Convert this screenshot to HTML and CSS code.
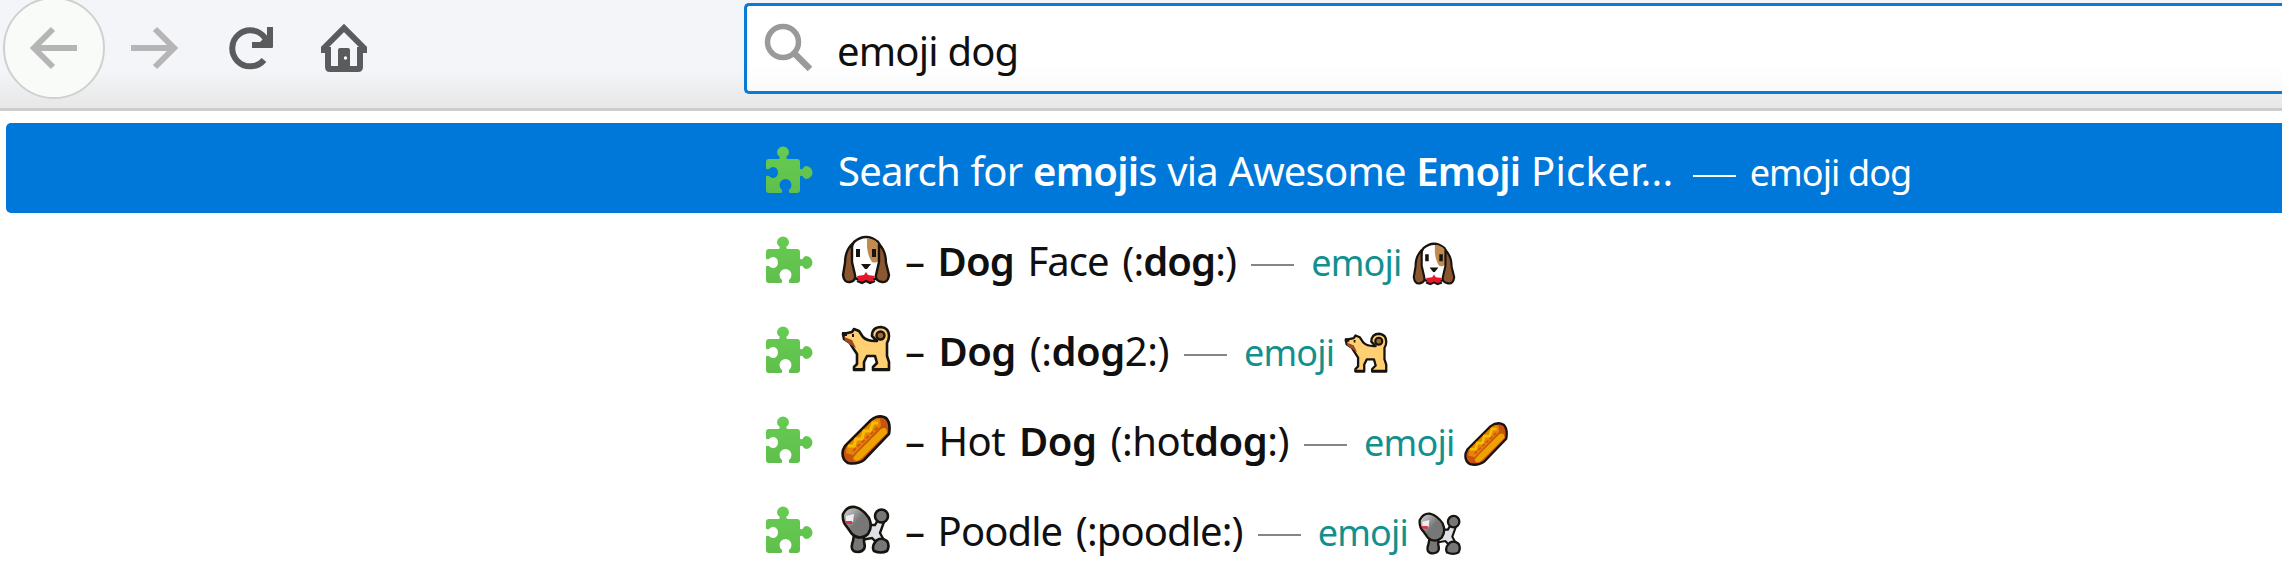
FILE: index.html
```html
<!DOCTYPE html>
<html lang="en">
<head>
<meta charset="utf-8">
<title>emoji dog</title>
<link rel="stylesheet" href="styles.css">
</head>
<body>
<svg class="defs" aria-hidden="true">
  <defs>
    <linearGradient id="green" x1="0" y1="0" x2="0" y2="1"><stop offset="0" stop-color="#66cc52"/><stop offset="1" stop-color="#60bf4c"/></linearGradient>
    <linearGradient id="fur" x1="0" y1="0" x2="1" y2="1"><stop offset="0.1" stop-color="#c8c8c8"/><stop offset="0.5" stop-color="#777"/><stop offset="1" stop-color="#777"/></linearGradient>
    <symbol id="puzzle" viewBox="0 0 48 48">
      <path fill="url(#green)" d="M4 13H13.500Q15 13 14.600 10.500Q12 9 12 6.500A6 6 0 0 1 24 6.500Q24 9 21.500 10.500Q21 13 22.500 13H32Q35 13 35 16V22Q35 24 37.500 23Q39 20 41 20A6 6 0 0 1 41 33Q39 33 37.500 30Q35 29 35 31V44Q35 47 32 47H25Q23.500 47 24 44Q26.500 42 26.500 39A6 6 0 0 0 14.500 39Q14.500 42 17 44Q17.500 47 16 47H4Q1 47 1 44V31Q1 29 4 30Q6 32.500 9 32A5.800 5.800 0 0 0 9 21Q6 20.500 4 23Q1 24 1 22V16Q1 13 4 13Z"/>
    </symbol>
    <symbol id="dogface" viewBox="0 0 50 50">
      <path fill="#fff" stroke="#17130f" stroke-width="2.600" d="M13 7Q25-3 37 7Q40 11 40 20V40L34 44H16L10 40V18Q10 11 13 7Z"/>
      <path fill="#c18a50" d="M26 3Q36 4 39 12V24Q37 29 31 27Q27 22 26 12Z"/>
      <path fill="#8b5730" stroke="#17130f" stroke-width="2.400" stroke-linejoin="round" d="M11 9Q4 16 4 28L2 40Q3 48 9 47Q15 46 14 40L11 27Z"/>
      <path fill="#8b5730" stroke="#17130f" stroke-width="2.400" stroke-linejoin="round" d="M38 9Q45 16 45 28L48 40Q47 48 41 47Q34 46 35 40L38 27Z"/>
      <path fill="#17130f" d="M15 14H19V22H15ZM31 14H35V22H31ZM20 29H30L26 34H24Z"/>
      <path fill="#e8152b" d="M25 37L27 40L34 41L31 47H18L16 41L23 40Z"/>
      <path fill="none" stroke="#17130f" stroke-width="2.200" d="M16 46L21 48L25 46L29 48L34 46"/>
    </symbol>
    <symbol id="dog" viewBox="0 0 50 50">
      <path fill="#ffcf72" stroke="#17130f" stroke-width="2.600" stroke-linejoin="round" d="M2 9L11 7L13 4L18 6L22 12Q26 16 34 16H36L31 11Q31 2 40 2Q48 3 48 11Q48 15 46 18V31L48 37V45H32V42L36 38L34 31H26L23 37V45H13V42L16 39V29L12 23L9 18L3 14Z"/>
      <circle cx="39.500" cy="10.500" r="4" fill="#9c6a34" stroke="#17130f" stroke-width="2.400"/>
      <path fill="none" stroke="#17130f" stroke-width="2" d="M12 44H23M31 44H48"/>
      <path fill="#9c4a24" d="M3 12L11 15L15 23L10 20L4 16Z"/>
      <path fill="#17130f" d="M1 7H6V11H1ZM11 9H13V12H11Z"/>
    </symbol>
    <symbol id="hotdog" viewBox="0 0 50 50">
      <path fill="#c85412" stroke="#17130f" stroke-width="2.600" d="M4 31L30 5Q38-1 45 3Q50 8 48 19L23 45Q16 50 7 48Q0 44 2 35Z"/>
      <path fill="#e58600" d="M6 31L31 6Q36 2 39 4L40 11L12 40L5 38Z"/>
      <path fill="#eda200" d="M16 38L40 14Q46 11 46 18L21 43Q14 49 12 43Z"/>
      <path fill="none" stroke="#f5be00" stroke-width="3" d="M7 31L13 31L15 24L21 24L23 16L29 16L32 8L37 8"/>
      <path fill="none" stroke="#cf5317" stroke-width="2" stroke-dasharray="4 2" d="M12 36L37 12"/>
    </symbol>
    <symbol id="poodle" viewBox="0 0 50 50">
      <path fill="#dfe1e6" stroke="#17130f" stroke-width="2.400" d="M20 20L34 20L38 13L43 17L39 28L45 39H37L31 33L20 35Z"/>
      <g fill="#777" stroke="#17130f" stroke-width="2.600"><path d="M13 30L12 36Q8 47 17 47Q26 46 23 37L23 30"/><circle cx="40.500" cy="11" r="6.500"/><path d="M36 35Q41 32 46 36Q49 41 46 46Q40 49 33 46Q30 41 36 35Z"/></g>
      <path fill="url(#fur)" stroke="#17130f" stroke-width="2.600" d="M2 9Q6 1 14 2Q22 4 28 13Q32 22 27 29Q19 36 11 29L6 22Q1 17 2 9Z"/>
      <path fill="#eceef2" d="M5 11L13 9L12 17L5 16Z"/>
      <path fill="#df3443" d="M4 16H11V19H5Z"/>
    </symbol>
  </defs>
</svg>
<header class="toolbar">
  <nav class="buttons">
    <span class="back"><svg width="50" height="44" viewBox="0 0 50 44"><path d="M48 22H5M24 3L5 22L24 41" fill="none" stroke="#b5b5b6" stroke-width="6"/></svg></span>
    <svg class="forward" width="50" height="44" viewBox="0 0 50 44"><path d="M2 22H45M26 3L45 22L26 41" fill="none" stroke="#b5b5b6" stroke-width="6"/></svg>
    <svg class="reload" width="48" height="44" viewBox="0 0 48 44"><path d="M37 34A18 18 0 1 1 38 12" fill="none" stroke="#5a5b5c" stroke-width="6"/><path fill="#5a5b5c" d="M40 1H46V21Q46 22 45 22H25V16H33L40 9Z"/></svg>
    <svg class="home" width="50" height="50" viewBox="0 0 50 50"><path fill="none" stroke="#5a5b5c" stroke-width="6" d="M2 27H9V44Q9 46 11 46H39Q41 46 41 44V27H48M4 26L25 5L46 26"/><path fill="#5a5b5c" d="M19 47V27Q19 25 21 25H29Q31 25 31 27V47Z"/><circle cx="26.500" cy="35" r="1.700" fill="#fff"/></svg>
  </nav>
  <div class="urlbar">
    <svg width="50" height="50" viewBox="0 0 50 50"><circle cx="19" cy="19" r="15.500" fill="none" stroke="#9a9a9a" stroke-width="5.500"/><path d="M30 30L46 46" stroke="#9a9a9a" stroke-width="6.500"/></svg>
    <span class="query">emoji dog</span>
  </div>
</header>
<main class="results">
  <div class="row selected"><svg class="puzzle"><use href="#puzzle"/></svg><span class="title">Search for <b>emoji</b>s via Awesome <b>Emoji</b> <span class="action">Picker...</span></span><i class="dash"></i><span class="url">emoji dog</span></div>
  <div class="row"><svg class="puzzle"><use href="#puzzle"/></svg><svg class="emoji"><use href="#dogface"/></svg><span class="title tight">– <b>Dog</b> Face (:<b>dog</b>:)</span><i class="dash"></i><span class="url">emoji</span><svg class="emoji small"><use href="#dogface"/></svg></div>
  <div class="row"><svg class="puzzle"><use href="#puzzle"/></svg><svg class="emoji"><use href="#dog"/></svg><span class="title">– <b>Dog</b> (:<b>dog</b>2:)</span><i class="dash"></i><span class="url">emoji</span><svg class="emoji small"><use href="#dog"/></svg></div>
  <div class="row"><svg class="puzzle"><use href="#puzzle"/></svg><svg class="emoji"><use href="#hotdog"/></svg><span class="title">– Hot <b>Dog</b> (:hot<b>dog</b>:)</span><i class="dash"></i><span class="url">emoji</span><svg class="emoji small"><use href="#hotdog"/></svg></div>
  <div class="row"><svg class="puzzle"><use href="#puzzle"/></svg><svg class="emoji"><use href="#poodle"/></svg><span class="title tight">– Poodle (:poodle:)</span><i class="dash"></i><span class="url">emoji</span><svg class="emoji small"><use href="#poodle"/></svg></div>
</main>
</body>
</html>
```
FILE: styles.css
```css
* { box-sizing: border-box; }
body { margin: 0; width: 2282px; height: 587px; overflow: hidden; background: #fff; color: #101010; font-family: "Noto Sans", "Open Sans", sans-serif; font-size: 40px; }
svg { display: block; flex: none; }
.defs { position: absolute; width: 0; height: 0; }
.toolbar { display: flex; height: 111px; padding-top: 3px; background: linear-gradient(#f4f5f8 0, #f4f5f8 65%, #e7e7e8 100%); border-bottom: 3px solid #cdcdcd; }
.buttons { display: flex; align-items: flex-start; width: 744px; flex: none; }
.back { display: flex; align-items: center; justify-content: center; width: 102px; height: 102px; margin: -6px 0 0 3px; border: 2px solid #cfd0d0; border-radius: 50%; background: #f9fbf9; flex: none; }
.forward { margin: 23px 0 0 24px; }
.reload { margin: 23px 0 0 48px; }
.home { margin: 20px 0 0 44px; }
.urlbar { display: flex; align-items: flex-start; flex: 1; height: 91px; border: 3px solid #0a7bd5; border-right: 0; border-radius: 5px 0 0 5px; background: linear-gradient(#fff 70%, #fafafa); padding-left: 17px; line-height: 87px; }
.urlbar svg { margin-top: 17px; }
.query { margin-left: 23px; letter-spacing: -0.8px; padding-top: 1px; }
.results { padding-top: 12px; }
.row { display: flex; align-items: baseline; height: 90px; margin-left: 6px; padding: 5px 0 0 759px; line-height: 85px; white-space: nowrap; }
.selected { background: #0078d9; color: #fff; border-radius: 5px 0 0 5px; }
.puzzle { align-self: flex-start; width: 48px; height: 48px; margin: 18px 25px 0 0; }
.emoji { align-self: flex-start; width: 50px; height: 50px; margin: 17px 14px 0 3px; }
.title { letter-spacing: -0.5px; word-spacing: 4px; }
.title.tight { letter-spacing: -0.9px; word-spacing: 4px; }
.title b { font-weight: 600; }
.selected .title { letter-spacing: -0.8px; word-spacing: 1px; }
.selected .action { letter-spacing: 0.3px; }
.dash { align-self: flex-start; width: 43px; height: 2px; margin: 46px 17px 0 15px; background: #858585; }
.selected .dash { margin: 47px 14px 0 19px; background: #fff; }
.url { font-size: 36px; letter-spacing: -0.8px; color: #12908e; }
.selected .url { letter-spacing: -0.9px; color: #fff; }
.small { width: 44px; height: 44px; margin: 24px 0 0 10px; }
```
